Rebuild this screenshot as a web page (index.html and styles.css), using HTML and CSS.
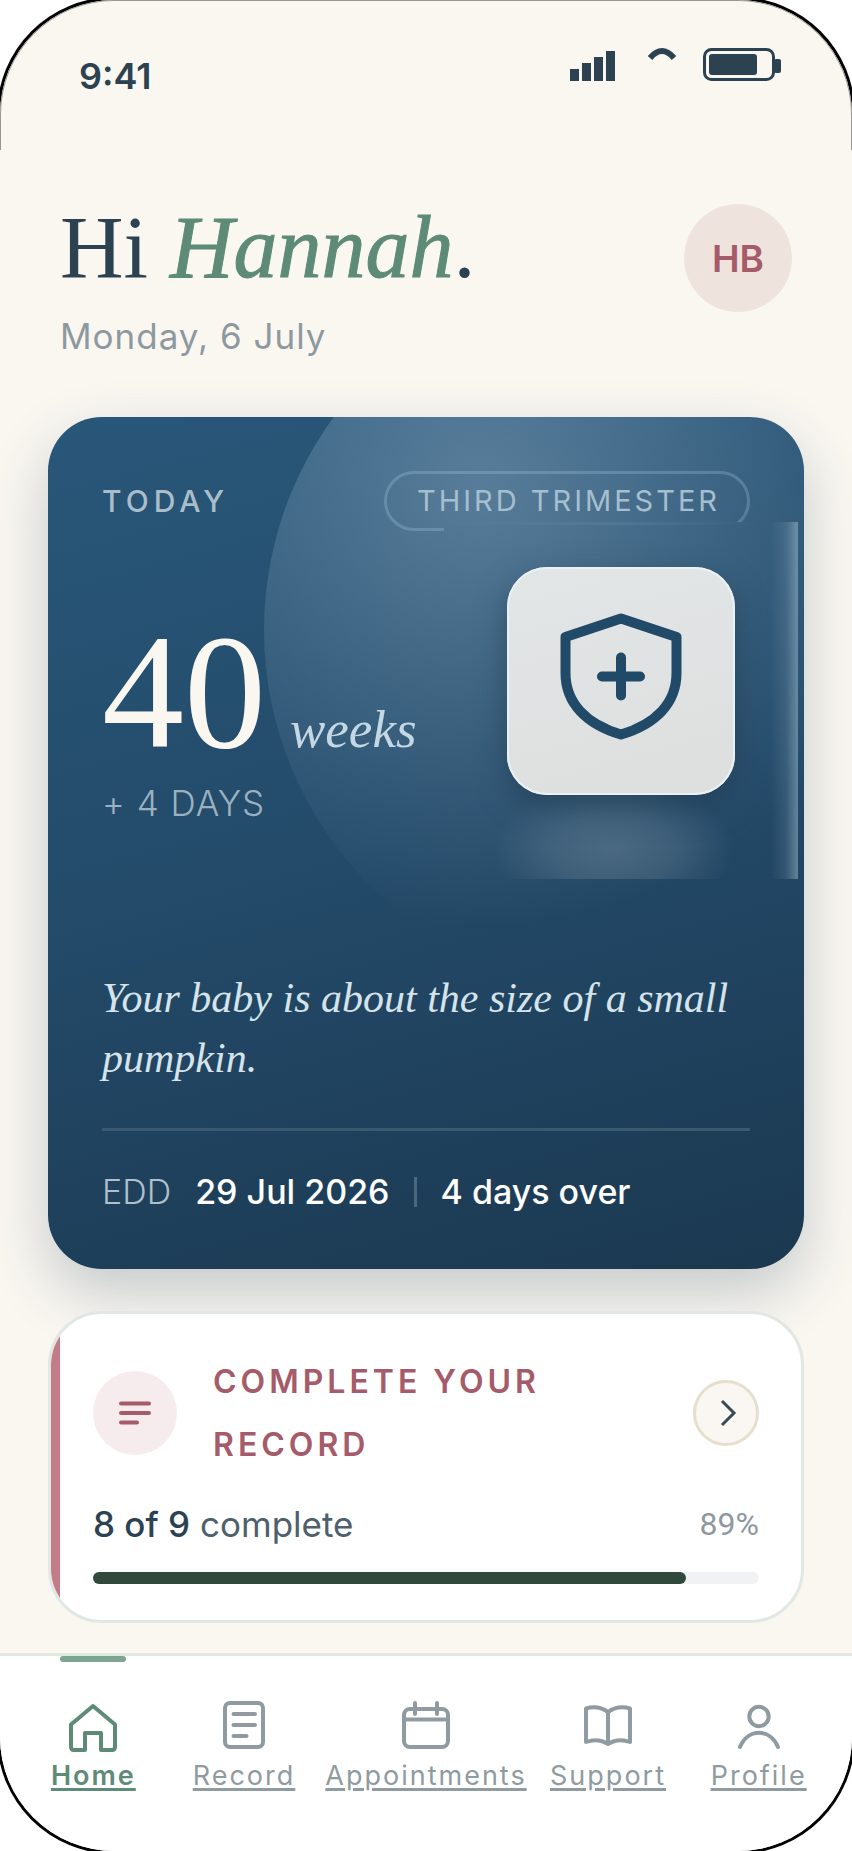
FILE: index.html
```html
<!DOCTYPE html>
<html lang="en">
<head>
    <meta charset="UTF-8">
    <meta name="viewport" content="width=device-width, initial-scale=1.0">
    <title>Home</title>
    <link rel="stylesheet" href="styles.css">
</head>
<body>
    <div class="phone">
        <div class="status-bar">
            <span class="time">9:41</span>
            <div class="status-icons">
                <svg width="51" height="33" viewBox="0 0 51 33" fill="currentColor">
                    <rect x="0" y="21" width="9" height="12"/>
                    <rect x="12" y="15" width="9" height="18"/>
                    <rect x="24" y="9" width="9" height="24"/>
                    <rect x="36" y="3" width="9" height="30"/>
                </svg>
                <svg width="28" height="33" viewBox="0 0 28 33" fill="none" stroke="currentColor" stroke-width="6">
                    <path d="M2 10 Q14 -4 26 10"/>
                </svg>
                <svg width="78" height="33" viewBox="0 0 78 33">
                    <rect x="1.5" y="1.5" width="69" height="30" rx="7" fill="none" stroke="currentColor" stroke-width="3"/>
                    <rect x="6" y="6" width="48" height="21" rx="3" fill="currentColor"/>
                    <rect x="71" y="11" width="7" height="14" rx="2" fill="currentColor"/>
                </svg>
            </div>
        </div>

        <header class="greeting">
            <div>
                <h1>Hi <em>Hannah</em>.</h1>
                <p class="date">Monday, 6 July</p>
            </div>
            <button type="button" class="avatar">HB</button>
        </header>

        <main>
            <section class="hero">
                <div class="hero-top">
                    <span class="today">TODAY</span>
                    <span class="pill">THIRD TRIMESTER</span>
                </div>

                <div class="hero-middle">
                    <div class="weeks">
                        <div class="weeks-row">
                            <span class="weeks-number">40</span>
                            <span class="weeks-label">weeks</span>
                        </div>
                        <div class="days">+ 4 DAYS</div>
                    </div>
                    <div class="visual">
                        <div class="tile">
                            <svg width="228" height="228" viewBox="0 0 228 228" fill="none" stroke="currentColor" stroke-width="10" stroke-linecap="round" stroke-linejoin="round">
                                <path d="M114 51.5 L169.5 70 V106 C169.5 136 149 157 114 167.5 C79 157 58.5 136 58.5 106 V70 Z"/>
                                <path d="M114 90.5 V128.5 M95 109.5 H133"/>
                            </svg>
                        </div>
                    </div>
                </div>

                <p class="quote">Your baby is about the size of a small pumpkin.</p>

                <div class="due">
                    <span class="due-label">EDD</span>
                    <span class="due-value">29 Jul 2026</span>
                    <span class="due-line"></span>
                    <span class="due-value">4 days over</span>
                </div>
            </section>

            <section class="record">
                <div class="record-top">
                    <div class="record-icon">
                        <svg width="84" height="84" viewBox="0 0 84 84" fill="none" stroke="currentColor" stroke-width="4" stroke-linecap="round">
                            <path d="M28 32.5 H56 M28 42 H56 M28 51.5 H44"/>
                        </svg>
                    </div>
                    <h2>COMPLETE YOUR RECORD</h2>
                    <button type="button" class="record-open" aria-label="Open record">
                        <svg width="60" height="60" viewBox="0 0 60 60" fill="none" stroke="currentColor" stroke-width="3">
                            <path d="M26 18 L38 30 L26 42"/>
                        </svg>
                    </button>
                </div>
                <div class="record-count">
                    <span class="count"><strong>8 of 9</strong> complete</span>
                    <span class="percent">89%</span>
                </div>
                <div class="progress">
                    <div class="progress-fill" style="width: 89%"></div>
                </div>
            </section>
        </main>

        <nav class="tabs">
            <a href="#home" class="tab active">
                <svg class="tab-icon" viewBox="0 0 54 54">
                    <path d="M27 8 L49 26.5 V49 Q49 52 46 52 H35 V35 H19 V52 H8 Q5 52 5 49 V26.5 Z"/>
                </svg>
                <span>Home</span>
            </a>
            <a href="#record" class="tab">
                <svg class="tab-icon" viewBox="0 0 54 54">
                    <rect x="8" y="5" width="38" height="44" rx="5"/>
                    <path d="M16.5 16 H38 M16.5 27 H38 M16.5 38 H29.5"/>
                </svg>
                <span>Record</span>
            </a>
            <a href="#appointments" class="tab">
                <svg class="tab-icon" viewBox="0 0 54 54">
                    <rect x="5" y="11" width="44" height="38" rx="6"/>
                    <path d="M5 21.5 H49 M16 5 V16 M38 5 V16"/>
                </svg>
                <span>Appointments</span>
            </a>
            <a href="#support" class="tab">
                <svg class="tab-icon" viewBox="0 0 54 54">
                    <path d="M27 14 Q17 7 5 10.5 V44 Q17 39.5 27 46 Q37 39.5 49 44 V10.5 Q37 7 27 14 V46"/>
                </svg>
                <span>Support</span>
            </a>
            <a href="#profile" class="tab">
                <svg class="tab-icon" viewBox="0 0 54 54">
                    <circle cx="27" cy="18.5" r="9.7"/>
                    <path d="M8 49 C16 30 38 30 46 49"/>
                </svg>
                <span>Profile</span>
            </a>
        </nav>
    </div>
</body>
</html>
```

FILE: styles.css
```css
* {
    box-sizing: border-box;
}

body {
    margin: 0;
    background-color: #fff;
    font-family: Inter, "Liberation Sans", sans-serif;
    color: #2d4250;
}

h1,
h2,
p {
    margin: 0;
}

button {
    padding: 0;
    font-family: inherit;
    cursor: pointer;
}

svg {
    display: block;
}

.phone {
    display: flex;
    flex-direction: column;
    min-height: 100vh;
    overflow: hidden;
    background-color: #faf7f1;
    border-radius: 114px;
    box-shadow: 0 0 0 3px #000;
}

/* status bar */

.status-bar {
    display: flex;
    justify-content: space-between;
    align-items: flex-start;
    height: 150px;
    padding: 47px 70px 0 78px;
    border-radius: 114px 114px 0 0;
    border: 1px solid #999590;
    border-bottom: none;
}

.time {
    padding-top: 6px;
    font-size: 36px;
    line-height: 45px;
    font-weight: 600;
}

.status-icons {
    display: flex;
    gap: 27px;
}

/* greeting */

.greeting {
    display: flex;
    justify-content: space-between;
    align-items: flex-start;
    padding: 54px 60px 60px;
}

h1 {
    font-family: "Liberation Serif", serif;
    font-size: 88px;
    line-height: 87px;
    font-weight: 400;
}

h1 em {
    color: #5e8b77;
    -webkit-text-stroke: 1px #5e8b77;
}

.date {
    margin-top: 24px;
    font-size: 35px;
    line-height: 42px;
    letter-spacing: 1px;
    color: #8e999f;
}

.avatar {
    width: 108px;
    height: 108px;
    border: none;
    border-radius: 50%;
    background-color: #efe3de;
    color: #a55b6a;
    font-size: 37px;
    font-weight: 600;
}

main {
    flex: 1;
    padding: 0 48px 30px;
}

/* hero card */

.hero {
    position: relative;
    padding: 54px;
    border-radius: 54px;
    overflow: hidden;
    background: linear-gradient(165deg, #295779 0%, #234a69 50%, #1b3850 100%);
    box-shadow: 0 24px 60px rgba(28, 58, 82, 0.24);
}

.hero::before {
    content: "";
    position: absolute;
    top: -147px;
    right: -180px;
    width: 720px;
    height: 720px;
    border-radius: 50%;
    background: radial-gradient(circle at 30% 30%, rgba(200, 222, 242, 0.3), transparent 62%);
}

.hero-top {
    position: relative;
    display: flex;
    justify-content: space-between;
    align-items: center;
    height: 60px;
}

.today {
    font-size: 30px;
    font-weight: 500;
    letter-spacing: 5px;
    color: #a9bdca;
}

/* the bottom edge runs behind the tile panel */
.pill {
    padding: 0 27px 0 30px;
    border: 3px solid rgba(160, 200, 225, 0.3);
    border-radius: 30px;
    font-size: 29px;
    line-height: 54px;
    letter-spacing: 3px;
    color: #a5bfd0;
    clip-path: polygon(0 0, 100% 0, 100% 51px, 60px 51px, 60px 100%, 0 100%);
}

.hero-middle {
    position: relative;
    display: flex;
    justify-content: space-between;
    align-items: flex-start;
    margin-top: 36px;
    padding-right: 15px;
}

.weeks {
    padding-top: 45px;
}

.weeks-row {
    display: flex;
    align-items: baseline;
    gap: 24px;
    font-family: "Liberation Serif", serif;
}

.weeks-number {
    font-size: 164px;
    line-height: 160px;
    color: #faf7f1;
}

.weeks-label {
    font-size: 53px;
    font-style: italic;
    color: #c3d8e4;
}

.days {
    margin-top: 10px;
    font-size: 35px;
    line-height: 42px;
    font-weight: 300;
    letter-spacing: 1px;
    color: #9cb1c0;
}

.visual {
    position: relative;
}

/* soft panel behind the tile */
.visual::before {
    content: "";
    position: absolute;
    top: -45px;
    right: -63px;
    bottom: -84px;
    left: -63px;
    background:
        linear-gradient(to left, rgba(190, 215, 230, 0.42), rgba(190, 215, 230, 0.12) 12px, transparent 27px),
        linear-gradient(to right, transparent, rgba(160, 200, 225, 0.1) 50%, transparent 90%) top / 100% 3px no-repeat,
        radial-gradient(ellipse 120px 72px at 48% 92%, rgba(170, 180, 190, 0.26), rgba(170, 180, 190, 0.18) 50%, transparent);
}

.tile {
    position: relative;
    width: 228px;
    height: 228px;
    border-radius: 40px;
    background: linear-gradient(165deg, #e3e6e6, #dcdfde);
    box-shadow: inset 0 0 0 2px #e9f1f5, 0 12px 30px rgba(30, 55, 75, 0.55);
    color: #214a69;
}

.quote {
    position: relative;
    margin-top: 144px;
    font-family: "Liberation Serif", serif;
    font-size: 42px;
    line-height: 60px;
    font-style: italic;
    color: #d5e3ea;
}

.due {
    position: relative;
    display: flex;
    align-items: center;
    margin-top: 40px;
    padding: 40px 0 2px;
    border-top: 3px solid #3a586e;
    font-size: 34px;
    line-height: 42px;
}

.due-label {
    margin-right: 24px;
    font-weight: 300;
    color: #b0c0ca;
}

.due-value {
    font-weight: 500;
    color: #fff;
}

.due-line {
    width: 3px;
    height: 30px;
    margin: 0 24px;
    background-color: #4a677c;
}

/* record card */

.record {
    position: relative;
    margin-top: 42px;
    padding: 36px 42px;
    border: 3px solid #e0e7e4;
    border-radius: 54px;
    overflow: hidden;
    background-color: #fff;
}

.record::before {
    content: "";
    position: absolute;
    top: 0;
    bottom: 0;
    left: 0;
    width: 9px;
    background-color: #c37b88;
}

.record-top {
    display: flex;
    align-items: center;
    gap: 36px;
}

.record-icon {
    border-radius: 50%;
    background-color: #f6eced;
    color: #a55b6a;
}

h2 {
    flex: 1;
    font-size: 32px;
    line-height: 63px;
    font-weight: 600;
    letter-spacing: 4px;
    color: #a55b6a;
}

.record-open {
    width: 66px;
    height: 66px;
    border: 3px solid #e6dfcd;
    border-radius: 50%;
    background-color: #faf6f1;
    color: #3a4a54;
}

.record-count {
    display: flex;
    justify-content: space-between;
    align-items: center;
    padding: 27px 0;
    line-height: 42px;
}

.count {
    font-size: 35px;
    color: #4d606c;
}

.count strong {
    font-weight: 500;
    color: #2d4250;
}

.percent {
    font-family: Roboto, sans-serif;
    font-size: 32px;
    font-weight: 400;
    color: #8e989f;
}

.progress {
    height: 12px;
    border-radius: 6px;
    background-color: #f1f2f4;
}

.progress-fill {
    height: 12px;
    border-radius: 6px;
    background-color: #2f4a3c;
}

/* bottom tabs */

.tabs {
    position: relative;
    display: flex;
    padding: 42px 18px 54px;
    border-top: 3px solid #dfe9e1;
    background-color: #fff;
}

.tab {
    position: relative;
    flex: 1 1 0;
    display: flex;
    flex-direction: column;
    align-items: center;
    gap: 3px;
    padding: 0 6px;
    font-size: 27px;
    line-height: 42px;
    letter-spacing: 2px;
    text-decoration: underline;
    text-decoration-thickness: 3px;
    text-underline-offset: 3px;
    color: #8f9ba1;
}

.tab.active {
    font-weight: 600;
    color: #5e8b77;
}

.tab.active::before {
    content: "";
    position: absolute;
    top: -42px;
    width: 66px;
    height: 6px;
    border-radius: 3px;
    background-color: #7da692;
}

.tab-icon {
    width: 54px;
    height: 54px;
    fill: none;
    stroke: currentColor;
    stroke-width: 4;
    stroke-linecap: round;
    stroke-linejoin: round;
}
```
